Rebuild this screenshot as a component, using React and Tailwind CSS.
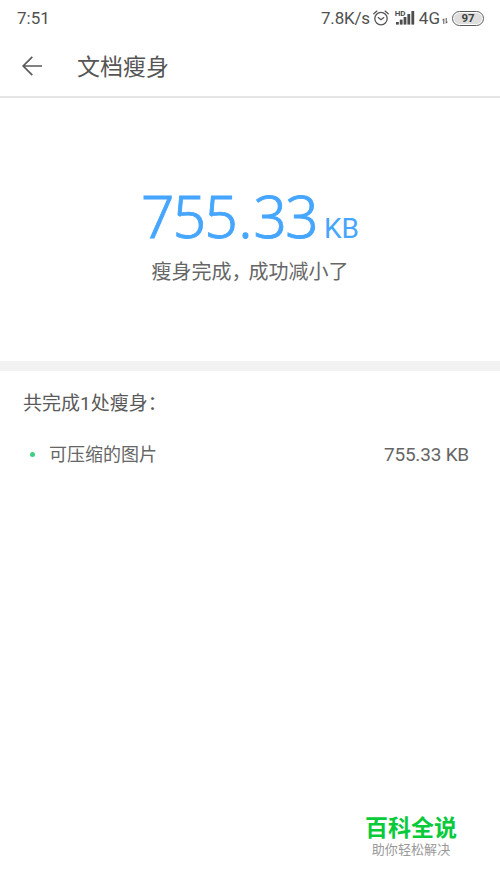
const items = [{ name: "可压缩的图片", size: "755.33 KB" }];

function AlarmIcon() {
  return (
    <svg width="16" height="16" viewBox="0 0 16 16" fill="none" stroke="#555" strokeWidth="1.3" strokeLinecap="round">
      <circle cx="8" cy="8.6" r="6.2" />
      <path d="M5.2 7.6 8 9.7l2.8-2.1" />
      <path d="M.8 3.8 3.9 1.1M15.2 3.8 12.1 1.1" />
    </svg>
  );
}

function SignalIcon() {
  return (
    <svg width="20" height="16" viewBox="0 0 20 16" fill="#4d4d4d">
      <text x="-0.3" y="5.6" fontSize="8" fontWeight="700" fontFamily="Roboto, sans-serif">HD</text>
      <rect x="1" y="12" width="2.8" height="2.6" />
      <rect x="4.8" y="9.6" width="2.8" height="5" />
      <rect x="8.6" y="7" width="2.8" height="7.6" />
      <rect x="12.4" y="4" width="2.8" height="10.6" />
      <rect x="16.4" y="1" width="2.8" height="13.6" />
    </svg>
  );
}

function DataArrows() {
  return (
    <svg width="6" height="6" viewBox="0 0 6 6" fill="none" stroke="#555" strokeWidth="1">
      <path d="M1.8 6V.8L.3 2.4M4.2 0v5.2l1.5-1.6" />
    </svg>
  );
}

function StatusBar() {
  return (
    <div className="flex h-9 items-center pl-[17px] pr-4 text-[17px] text-[#505050]">
      <span className="leading-9">7:51</span>
      <div className="ml-auto flex items-center">
        <span className="leading-9 tracking-[-0.2px]">7.8K/s</span>
        <div className="ml-[3px]">
          <AlarmIcon />
        </div>
        <div className="ml-1.5">
          <SignalIcon />
        </div>
        <span className="ml-1 leading-9">4G</span>
        <div className="ml-0.5 mt-1.5">
          <DataArrows />
        </div>
        <div className="ml-1 flex h-[15px] w-8 items-center justify-center rounded-full border-[1.5px] border-[#5a5a5a] p-px">
          <div className="flex h-full w-full items-center justify-center rounded-full bg-[#dedede] pt-px text-[11.5px] font-bold leading-none text-[#404040]">
            97
          </div>
        </div>
      </div>
    </div>
  );
}

function Header() {
  return (
    <div className="flex h-[62px] items-center border-b-2 border-[#e5e5e5] pl-[22px]">
      <svg width="20" height="20" viewBox="0 0 20 20" fill="none" stroke="#5a5a5a" strokeWidth="1.7" className="mb-px">
        <path d="M20 10H1M10.3.9 1.2 10l9.1 9.1" />
      </svg>
      <h1 className="ml-[35px] pt-[3px] text-[23px] leading-[57px] text-[#555]">文档瘦身</h1>
    </div>
  );
}

export default function App() {
  return (
    <div className="flex h-[888px] w-[500px] flex-col bg-white font-[Roboto,'Noto_Sans_CJK_SC',sans-serif] text-[#5a5a5a]">
      <StatusBar />
      <Header />

      {/* Result */}
      <div className="flex h-[263px] flex-col items-center pt-[86px]">
        <div className="flex items-baseline text-[#46a6ff]">
          <span className="font-['Noto_Sans'] text-[58.5px] font-light leading-[62px] tracking-[-1.7px] [-webkit-text-stroke:0.9px_#46a6ff]">
            755<span className="ml-0.5 tracking-[1px]">.</span>33
          </span>
          <span className="ml-[7px] text-[28px] leading-none">KB</span>
        </div>
        <p className="mt-3 text-[20px] leading-7 text-[#666]">
          瘦身完成<span className="tracking-[-3px]">，</span>成功减小了
        </p>
      </div>

      <div className="h-2.5 bg-[#f2f2f2]" />

      {/* Details */}
      <div className="pl-[23px] pr-[31px]">
        <p className="pt-[18px] text-[19px] leading-[30px]">共完成1处瘦身：</p>
        {items.map((item) => (
          <div key={item.name} className="mt-[21px] flex items-center pl-[7px] leading-[30px] text-[#666]">
            <span className="mb-px h-[5px] w-[5px] rounded-full bg-[#3dcf82]" />
            <span className="ml-3.5 text-[18px]">{item.name}</span>
            <span className="ml-auto text-[19px] tracking-[-0.2px]">{item.size}</span>
          </div>
        ))}
      </div>

      {/* Site mark */}
      <div className="mb-[30px] ml-auto mr-[43px] mt-auto text-center">
        <div className="text-[23px] font-bold leading-[27px] text-[#08ca3b]">百科全说</div>
        <div className="text-[13px] leading-4 tracking-[0.1px] text-[#999]">助你轻松解决</div>
      </div>
    </div>
  );
}
